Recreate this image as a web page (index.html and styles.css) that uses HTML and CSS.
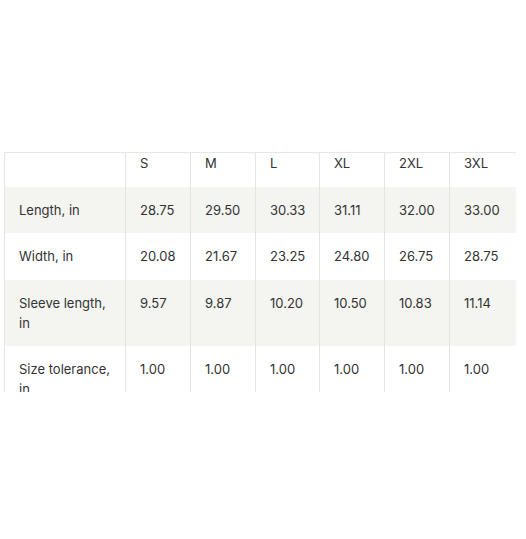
FILE: index.html
```html
<!DOCTYPE html>
<html>
<head>
<meta charset="utf-8">
<link rel="stylesheet" href="styles.css">
</head>
<body>
<div class="page">
  <div class="table-clip">
    <table class="size-table">
      <colgroup>
        <col class="c-label">
        <col class="c-size">
        <col class="c-size">
        <col class="c-size-n">
        <col class="c-size">
        <col class="c-size">
        <col class="c-size-w">
      </colgroup>
      <thead>
        <tr class="head">
          <th></th><th>S</th><th>M</th><th>L</th><th>XL</th><th>2XL</th><th>3XL</th>
        </tr>
      </thead>
      <tbody>
        <tr class="alt">
          <td>Length, in</td><td>28.75</td><td>29.50</td><td>30.33</td><td>31.11</td><td>32.00</td><td>33.00</td>
        </tr>
        <tr class="mid">
          <td>Width, in</td><td>20.08</td><td>21.67</td><td>23.25</td><td>24.80</td><td>26.75</td><td>28.75</td>
        </tr>
        <tr class="alt">
          <td>Sleeve length, in</td><td>9.57</td><td>9.87</td><td>10.20</td><td>10.50</td><td>10.83</td><td>11.14</td>
        </tr>
        <tr>
          <td>Size tolerance, in</td><td>1.00</td><td>1.00</td><td>1.00</td><td>1.00</td><td>1.00</td><td>1.00</td>
        </tr>
      </tbody>
    </table>
  </div>
</div>
</body>
</html>
```

FILE: styles.css
```css
html, body {
  margin: 0;
  padding: 0;
  background: #ffffff;
}

.page {
  padding-top: 152px;
  padding-left: 4px;
}

.table-clip {
  width: 512px;
  height: 239px;
  overflow: hidden;
  border-top: 1px solid #e6e6e4;
}

.size-table {
  width: 512px;
  table-layout: fixed;
  border-collapse: collapse;
  font-family: "Inter", "Liberation Sans", sans-serif;
  font-size: 13px;
  line-height: 20px;
  color: #333333;
}

.c-label { width: 121px; }
.c-size { width: 65px; }
.c-size-n { width: 64px; }
.c-size-w { width: 67px; }

.size-table th,
.size-table td {
  border-left: 1px solid #e4e4e2;
  border-right: 1px solid #e4e4e2;
  padding: 13px 8px 13px 14px;
  text-align: left;
  vertical-align: top;
  font-weight: 400;
}

.size-table .head th {
  padding-top: 0;
  padding-bottom: 14px;
}

.size-table tr.mid td {
  padding-bottom: 14px;
}

.size-table tr.alt td {
  background: #f4f4f0;
}
```
